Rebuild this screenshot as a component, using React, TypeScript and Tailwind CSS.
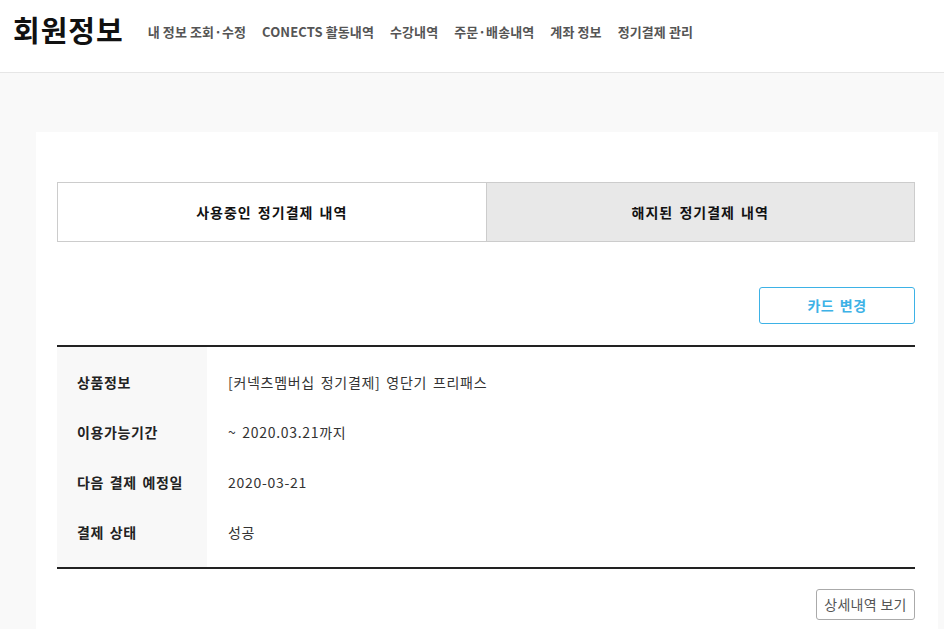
import React from "react";

const font = { fontFamily: '"Noto Sans CJK KR", "Noto Sans", sans-serif' };

const navItems = ["내 정보 조회·수정", "CONECTS 활동내역", "수강내역", "주문·배송내역", "계좌 정보", "정기결제 관리"];

const rows: [string, string][] = [
  ["상품정보", "[커넥츠멤버십 정기결제] 영단기 프리패스"],
  ["이용가능기간", "~ 2020.03.21까지"],
  ["다음 결제 예정일", "2020-03-21"],
  ["결제 상태", "성공"],
];

export default function App() {
  return (
    <div className="min-h-[629px] bg-[#f9f9f9]" style={font}>
      <header className="box-border flex h-[73px] items-center border-b border-[#e6e6e6] bg-white pl-[13px]">
        <h1 className="pb-[13px] text-[29px] font-bold leading-none tracking-[1px] text-[#111]">회원정보</h1>
        <nav className="ml-[24px] flex gap-[16px] pb-[10px]">
          {navItems.map((n) => (
            <span key={n} className="text-[13px] font-bold leading-none tracking-[0.1px] text-[#555]">
              {n}
            </span>
          ))}
        </nav>
      </header>

      <div className="pt-[59px]">
        <div className="ml-[36px] w-[902px] bg-white pl-[21px] pr-[23px] pt-[50px] pb-[20px]">
          <div className="flex h-[60px] border border-[#cccccc]">
            <div className="flex flex-1 items-center justify-center border-r border-[#cccccc] bg-white text-[14px] font-bold tracking-[1px] text-[#111] [word-spacing:2px]">
              사용중인 정기결제 내역
            </div>
            <div className="flex flex-1 items-center justify-center bg-[#e8e8e8] text-[14px] font-bold tracking-[1px] text-[#111] [word-spacing:2px]">
              해지된 정기결제 내역
            </div>
          </div>

          <div className="mt-[45px] flex justify-end">
            <button className="h-[37px] w-[156px] rounded-[3px] border border-[#3db2e6] bg-white text-[14px] font-bold tracking-[0.5px] text-[#3db2e6] [word-spacing:2px]">
              카드 변경
            </button>
          </div>

          <div className="mt-[21px] flex border-y-2 border-[#222]">
            <div className="w-[150px] bg-[#f8f8f8] py-[10px]">
              {rows.map(([l]) => (
                <div key={l} className="flex h-[50px] items-center pl-[20px] text-[14px] font-bold tracking-[0.6px] text-[#222] [word-spacing:2px]">
                  {l}
                </div>
              ))}
            </div>
            <div className="flex-1 py-[10px]">
              {rows.map(([l, v]) => (
                <div key={l} className="flex h-[50px] items-center pl-[21px] text-[14px] tracking-[0.7px] text-[#333] [word-spacing:2px]">
                  {v}
                </div>
              ))}
            </div>
          </div>

          <div className="mt-[20px] flex justify-end">
            <button className="h-[31px] w-[99px] rounded-[3px] border border-[#aaaaaa] bg-white text-[14px] tracking-[0.3px] text-[#555]">
              상세내역 보기
            </button>
          </div>
        </div>
      </div>
    </div>
  );
}
